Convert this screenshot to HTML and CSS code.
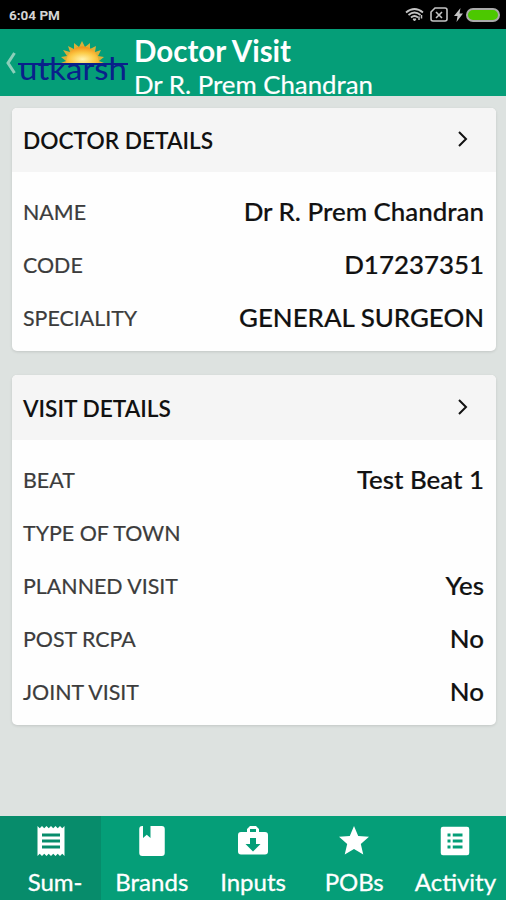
FILE: index.html
```
<!DOCTYPE html>
<html lang="en">

<head>
  <meta charset="utf-8">
  <title>Doctor Visit</title>
  <link rel="stylesheet" href="styles.css">
</head>

<body>
  <div class="statusBar">
    <span>6:04 PM</span>
    <div class="statusIcons">
      <svg width="20" height="16" viewBox="0 0 20 16" fill="none" stroke="#c4c4c4" stroke-width="1.8">
        <path d="M1 5.500Q9.500 -1.500 18 5.500M3.500 8Q9.500 3 15.500 8M6 10.500Q9.500 7.500 13 10.500" />
        <path d="M8 12l1.500 2 1.500-2z" fill="#c4c4c4" stroke-width="1" />
        <path d="M14 13V9.500M16.500 11.500V8" stroke-width="1.500" />
      </svg>
      <svg class="simIcon" width="18" height="15" viewBox="0 0 18 15" fill="none" stroke="#c4c4c4" stroke-width="1.600">
        <path d="M5 1h10a2 2 0 0 1 2 2v9a2 2 0 0 1-2 2H3a2 2 0 0 1-2-2V5z" />
        <path d="M6 5l6 6M12 5l-6 6" />
      </svg>
      <svg class="boltIcon" width="9" height="14" viewBox="0 0 9 14">
        <path d="M6.500 0L0 8h3.500L2.500 14 9 5.500H5.500z" fill="#c4c4c4" />
      </svg>
      <span class="battery"></span>
    </div>
  </div>

  <div class="header">
    <svg class="back" width="12" height="24" viewBox="0 0 12 24">
      <path d="M9.500 2L3 12l6.500 10" fill="none" stroke="#8ccfba" stroke-width="3" />
    </svg>
    <svg class="logo" width="112" height="48" viewBox="0 0 112 48">
      <defs>
        <radialGradient id="sun" cx="50%" cy="75%" r="75%">
          <stop offset="0" stop-color="#fff3b0" />
          <stop offset=".5" stop-color="#fccb48" />
          <stop offset="1" stop-color="#f08c14" />
        </radialGradient>
      </defs>
      <path d="M44 23l5-2-5-4 6-1-4-6 7 2-2-6 6 3 0-6 5 4 3-6 3 6 5-4 0 6 6-3-1 6 6-2-3 6 6 1-5 4 5 2z" fill="#d9b038" />
      <path d="M49 23.500a16.500 17 0 0 1 33 0z" fill="url(#sun)" />
      <path d="M1 24h110" stroke="#09208a" stroke-width="2" />
      <text class="logoText" x="2" y="40" textLength="108" lengthAdjust="spacingAndGlyphs">utkarsh</text>
    </svg>
    <div class="headerText">
      <div class="title">Doctor Visit</div>
      <div class="subtitle">Dr R. Prem Chandran</div>
    </div>
  </div>

  <div class="content">
    <div class="card">
      <div class="cardHeader">
        <span>DOCTOR DETAILS</span>
        <svg width="12" height="18" viewBox="0 0 12 18"><path d="M2 2l7 7-7 7" /></svg>
      </div>
      <div class="rows">
        <div class="row"><span class="label">NAME</span><span class="value">Dr R. Prem Chandran</span></div>
        <div class="row"><span class="label">CODE</span><span class="value">D17237351</span></div>
        <div class="row"><span class="label">SPECIALITY</span><span class="value">GENERAL SURGEON</span></div>
      </div>
    </div>

    <div class="card">
      <div class="cardHeader">
        <span>VISIT DETAILS</span>
        <svg width="12" height="18" viewBox="0 0 12 18"><path d="M2 2l7 7-7 7" /></svg>
      </div>
      <div class="rows">
        <div class="row"><span class="label">BEAT</span><span class="value">Test Beat 1</span></div>
        <div class="row"><span class="label">TYPE OF TOWN</span><span class="value"></span></div>
        <div class="row"><span class="label">PLANNED VISIT</span><span class="value">Yes</span></div>
        <div class="row"><span class="label">POST RCPA</span><span class="value">No</span></div>
        <div class="row"><span class="label">JOINT VISIT</span><span class="value">No</span></div>
      </div>
    </div>
  </div>

  <div class="tabs">
    <div class="tab active">
      <svg width="36" height="36" viewBox="0 0 24 24">
        <path d="M18 17H6v-2h12v2zm0-4H6v-2h12v2zm0-4H6V7h12v2zM3 22l1.500-1.500L6 22l1.500-1.500L9 22l1.500-1.500L12 22l1.500-1.500L15 22l1.500-1.500L18 22l1.500-1.500L21 22V2l-1.500 1.500L18 2l-1.500 1.500L15 2l-1.500 1.500L12 2l-1.500 1.500L9 2 7.500 3.500 6 2 4.500 3.500 3 2v20z" />
      </svg>
      <span class="tabLabel">Sum-</span>
    </div>
    <div class="tab">
      <svg width="36" height="36" viewBox="0 0 24 24">
        <path d="M5.500 2H6v8l2.500-2.200L11 10V2h7.500a2 2 0 0 1 2 2v16a2 2 0 0 1-2 2h-13a2 2 0 0 1-2-2V4a2 2 0 0 1 2-2z" />
      </svg>
      <span class="tabLabel">Brands</span>
    </div>
    <div class="tab">
      <svg width="36" height="36" viewBox="0 0 24 24">
        <path fill-rule="evenodd" d="M20 6h-4V4l-2-2h-4L8 4v2H4a2 2 0 0 0-2 2v11a2 2 0 0 0 2 2h16a2 2 0 0 0 2-2V8a2 2 0 0 0-2-2zM10 4h4v2h-4zm2 15l-5-5h3v-4h4v4h3z" />
      </svg>
      <span class="tabLabel">Inputs</span>
    </div>
    <div class="tab">
      <svg width="36" height="36" viewBox="0 0 24 24">
        <path d="M12 17.270L18.180 21l-1.640-7.030L22 9.240l-7.190-.610L12 2 9.190 8.630 2 9.240l5.460 4.730L5.820 21z" />
      </svg>
      <span class="tabLabel">POBs</span>
    </div>
    <div class="tab">
      <svg width="36" height="36" viewBox="0 0 24 24">
        <path fill-rule="evenodd" d="M4 2.500h16a1.500 1.500 0 0 1 1.500 1.500v16a1.500 1.500 0 0 1-1.500 1.500H4A1.500 1.500 0 0 1 2.500 20V4A1.500 1.500 0 0 1 4 2.500zM7 7v2h2V7zm3.500 0v2H17V7zM7 11v2h2v-2zm3.500 0v2H17v-2zM7 15v2h2v-2zm3.500 0v2H17v-2z" />
      </svg>
      <span class="tabLabel">Activity</span>
    </div>
  </div>
</body>

</html>
```
FILE: styles.css
```
body {
  margin: 0;
  height: 900px;
  display: flex;
  flex-direction: column;
  overflow: hidden;
  background: #dde2e0;
  font-family: Lato, sans-serif;
}

.statusBar {
  display: flex;
  justify-content: space-between;
  align-items: center;
  height: 29px;
  padding: 0 6px 0 9px;
  box-sizing: border-box;
  background: #000;
  color: #d4d4d4;
  font-family: Roboto, sans-serif;
  font-size: 13.5px;
  font-weight: 700;
}

.statusIcons {
  display: flex;
  align-items: center;
}

.simIcon {
  margin-left: 5px;
}

.boltIcon {
  margin: 0 3px 0 6px;
}

.battery {
  width: 34px;
  height: 14px;
  box-sizing: border-box;
  border: 2px solid #aaa;
  border-radius: 7px;
  background: #4cc800;
}

.header {
  display: flex;
  height: 67px;
  box-sizing: border-box;
  padding-left: 5px;
  background: #059e78;
  color: #fff;
}

.back {
  margin-top: 22px;
}

.logo {
  margin-top: 11px;
}

.logoText {
  font-family: Lato, sans-serif;
  font-size: 31px;
  fill: #09208a;
}

.headerText {
  margin-left: 5px;
  white-space: nowrap;
}

.title {
  margin-top: 4px;
  font-size: 29.5px;
  line-height: 35px;
  font-weight: 700;
}

.subtitle {
  font-size: 25.8px;
  line-height: 33px;
  -webkit-text-stroke: 0.2px #fff;
}

.content {
  flex-grow: 1;
  padding: 12px 10px 0 12px;
}

.card {
  margin-bottom: 24px;
  border-radius: 5px;
  overflow: hidden;
  background: #fefefe;
  box-shadow: 0 1px 3px rgba(0, 0, 0, 0.12);
}

.cardHeader {
  display: flex;
  justify-content: space-between;
  align-items: center;
  height: 64px;
  padding: 0 27px 0 11px;
  background: #f5f5f5;
  color: #111;
  font-size: 22.7px;
  font-weight: 600;
}

.cardHeader svg {
  margin-bottom: 2px;
}

.card + .card .cardHeader {
  height: 65px;
}

.card + .card .cardHeader span {
  padding-top: 1px;
}

.cardHeader path {
  fill: none;
  stroke: #111;
  stroke-width: 2;
}

.rows {
  padding: 13px 12px 7px 11px;
}

.row {
  display: flex;
  justify-content: space-between;
  align-items: flex-start;
  height: 53px;
  line-height: 52px;
}

.label {
  padding-top: 1px;
  color: #3c3c3c;
  font-size: 21.4px;
  -webkit-text-stroke: 0.2px #3c3c3c;
}

.value {
  color: #111;
  font-size: 25.9px;
  font-weight: 500;
  -webkit-text-stroke: 0.2px #111;
}

.tabs {
  display: flex;
  height: 84px;
  background: #059e78;
  color: #fff;
}

.tab {
  flex: 1 1 0;
  display: flex;
  flex-direction: column;
  align-items: center;
}

.tab.active {
  background: #078c6b;
}

.tab svg {
  margin-top: 7px;
  fill: #fff;
}

.tabLabel {
  font-size: 24px;
  line-height: 30px;
  margin-top: 8px;
  -webkit-text-stroke: 0.3px #fff;
}

.active .tabLabel {
  padding-left: 9px;
}
```
